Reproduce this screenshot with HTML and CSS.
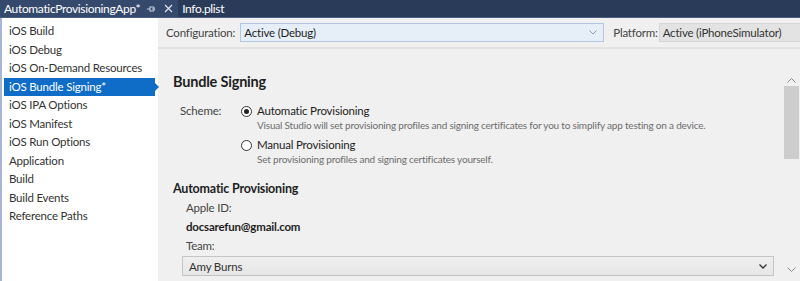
FILE: index.html
```html
<!DOCTYPE html>
<html lang="en">
<head>
  <meta charset="UTF-8" />
  <title>AutomaticProvisioningApp - iOS Bundle Signing</title>
  <link rel="stylesheet" href="styles.css">
</head>
<body>
  <div class="tabbar">
    <div class="tab active">
      <span class="tab-title">AutomaticProvisioningApp*</span>
      <svg class="pin" width="10" height="8" viewBox="0 0 10 8"><path d="M1 4h3M4 1.5v5M4 2h4v4H4M6 4h3" fill="none" stroke="#c9d2e3" stroke-width="1"/></svg>
      <svg class="close" width="9" height="9" viewBox="0 0 9 9"><path d="M1 1l7 7M8 1L1 8" stroke="#dfe5ef" stroke-width="1.2"/></svg>
    </div>
    <div class="tab">
      <span class="tab-title">Info.plist</span>
    </div>
  </div>

  <div class="main">
    <!-- Property pages -->
    <ul class="sidebar">
      <li>iOS Build</li>
      <li>iOS Debug</li>
      <li>iOS On-Demand Resources</li>
      <li class="selected">iOS Bundle Signing*</li>
      <li>iOS IPA Options</li>
      <li>iOS Manifest</li>
      <li>iOS Run Options</li>
      <li>Application</li>
      <li>Build</li>
      <li>Build Events</li>
      <li>Reference Paths</li>
    </ul>

    <div class="content">
      <div class="config-row">
        <span class="config-label">Configuration:</span>
        <div class="combo config-combo">
          <span>Active (Debug)</span>
          <svg width="8" height="5" viewBox="0 0 8 5"><path d="M0.5 0.5l3.5 3.5 3.5-3.5" fill="none" stroke="#8a9bb4" stroke-width="1"/></svg>
        </div>
        <span class="config-label platform-label">Platform:</span>
        <div class="combo platform-combo"><span>Active (iPhoneSimulator)</span></div>
      </div>

      <div class="page">
        <div class="form">
          <h2>Bundle Signing</h2>

          <div class="scheme">
            <span class="scheme-label">Scheme:</span>
            <div class="options">
              <div class="option">
                <span class="radio checked"></span>
                <div>
                  <div class="option-title">Automatic Provisioning</div>
                  <div class="option-desc">Visual Studio will set provisioning profiles and signing certificates for you to simplify app testing on a device.</div>
                </div>
              </div>
              <div class="option">
                <span class="radio"></span>
                <div>
                  <div class="option-title">Manual Provisioning</div>
                  <div class="option-desc">Set provisioning profiles and signing certificates yourself.</div>
                </div>
              </div>
            </div>
          </div>

          <h3>Automatic Provisioning</h3>
          <div class="field">
            <div class="field-label">Apple ID:</div>
            <div class="field-value">docsarefun@gmail.com</div>
            <div class="field-label">Team:</div>
            <div class="combo team-combo">
              <span>Amy Burns</span>
              <svg width="8" height="5" viewBox="0 0 8 5"><path d="M0.5 0.5l3.5 3.5 3.5-3.5" fill="none" stroke="#333" stroke-width="1.3"/></svg>
            </div>
          </div>
        </div>

        <div class="scrollbar">
          <svg class="arrow" width="9" height="5" viewBox="0 0 9 5"><path d="M0.5 4.5l4-4 4 4" fill="none" stroke="#8a8a8a" stroke-width="1"/></svg>
          <div class="thumb"></div>
          <div class="track"></div>
          <svg class="arrow" width="9" height="5" viewBox="0 0 9 5"><path d="M0.5 0.5l4 4 4-4" fill="none" stroke="#8a8a8a" stroke-width="1"/></svg>
        </div>
      </div>
    </div>
  </div>
</body>
</html>
```

FILE: styles.css
```css
html, body {
  margin: 0;
  height: 100%;
}
body {
  font-family: Lato, 'Open Sans', sans-serif;
  font-size: 11.5px;
  letter-spacing: -0.2px;
  color: #1e1e1e;
  background: #f0f0f0;
  overflow: hidden;
  display: flex;
  flex-direction: column;
}
.tabbar {
  height: 17px;
  background: #293b58;
  border-bottom: 1px solid #4a5f82;
  display: flex;
  align-items: center;
  flex-shrink: 0;
}
.tab {
  height: 100%;
  display: flex;
  align-items: center;
  padding: 0 5px 0 4px;
  color: #fff;
  font-size: 12px;
  letter-spacing: -0.35px;
}
.tab.active {
  background: #34496b;
}
.pin {
  margin-left: 6px;
}
.close {
  margin-left: 8px;
}
.main {
  flex: 1;
  display: flex;
  min-height: 0;
}
.sidebar {
  list-style: none;
  margin: 0;
  padding: 4px 3px 0 2px;
  width: 151px;
  background: #fff;
  border-left: 2px solid #a9b5d8;
  flex-shrink: 0;
}
.sidebar li {
  height: 18.5px;
  line-height: 18.5px;
  padding-left: 5px;
  color: #333;
  white-space: nowrap;
  position: relative;
}
.sidebar li.selected {
  background: #0f6dc7;
  color: #fff;
}
.sidebar li.selected::after {
  content: '';
  position: absolute;
  right: -4px;
  top: 5px;
  border-left: 4px solid #0f6dc7;
  border-top: 4px solid transparent;
  border-bottom: 4px solid transparent;
}
.content {
  flex: 1;
  display: flex;
  flex-direction: column;
  min-width: 0;
}
.config-row {
  display: flex;
  align-items: center;
  height: 29px;
  padding: 0 0 0 8px;
  border-bottom: 2px solid #e2e2e2;
  flex-shrink: 0;
}
.config-label {
  color: #444;
  margin-right: 5px;
}
.platform-label {
  margin-right: 1px;
}
.combo {
  height: 19px;
  display: flex;
  align-items: center;
  justify-content: space-between;
  padding: 0 6px 0 3px;
  box-sizing: border-box;
}
.config-combo {
  width: 364px;
  background: #e6eef8;
  border: 1px solid #b3c7e3;
  margin-right: 9px;
}
.platform-combo {
  flex: 1;
  background: #e3e3e3;
  border: 1px solid #d6d6d6;
  border-right: none;
  color: #333;
  white-space: nowrap;
}
.page {
  flex: 1;
  display: flex;
  min-height: 0;
}
.form {
  flex: 1;
  padding: 0 0 0 15px;
  min-width: 0;
}
h2 {
  font-size: 14.5px;
  font-weight: 700;
  margin: 24px 0 13px;
  color: #1e1e1e;
}
.scheme {
  display: flex;
  padding-left: 7px;
}
.scheme-label {
  width: 61px;
  color: #444;
  margin-top: 1px;
}
.option {
  display: flex;
  align-items: flex-start;
  margin-bottom: 5px;
}
.radio {
  width: 9px;
  height: 9px;
  border: 1px solid #333;
  border-radius: 50%;
  background: #fff;
  margin: 3px 5px 0 0;
  flex-shrink: 0;
  position: relative;
}
.radio.checked::after {
  content: '';
  position: absolute;
  left: 2px;
  top: 2px;
  width: 5px;
  height: 5px;
  border-radius: 50%;
  background: #222;
}
.option-title {
  color: #1e1e1e;
  line-height: 15px;
}
.option-desc {
  font-size: 10px;
  letter-spacing: -0.2px;
  color: #6d6d6d;
  line-height: 14px;
  white-space: nowrap;
}
h3 {
  font-size: 12.5px;
  font-weight: 700;
  margin: 10px 0 2px;
  color: #1e1e1e;
}
.field {
  padding-left: 13px;
}
.field-label {
  color: #444;
  height: 19px;
  line-height: 19px;
}
.field-value {
  font-weight: 700;
  height: 19px;
  line-height: 19px;
}
.team-combo {
  margin: 1px 0 0 -4px;
  width: 592px;
  height: 20px;
  background: linear-gradient(#efefef, #e6e6e6);
  border: 1px solid #c5c5c5;
  padding-left: 6px;
  color: #333;
}
.scrollbar {
  width: 17px;
  display: flex;
  flex-direction: column;
  align-items: center;
  padding-top: 29px;
  flex-shrink: 0;
}
.scrollbar .arrow {
  flex-shrink: 0;
}
.thumb {
  width: 15px;
  height: 73px;
  background: #cdcdcd;
  margin-top: 3px;
}
.track {
  flex: 1;
}
.scrollbar .arrow:last-child {
  margin-bottom: 9px;
}
```
